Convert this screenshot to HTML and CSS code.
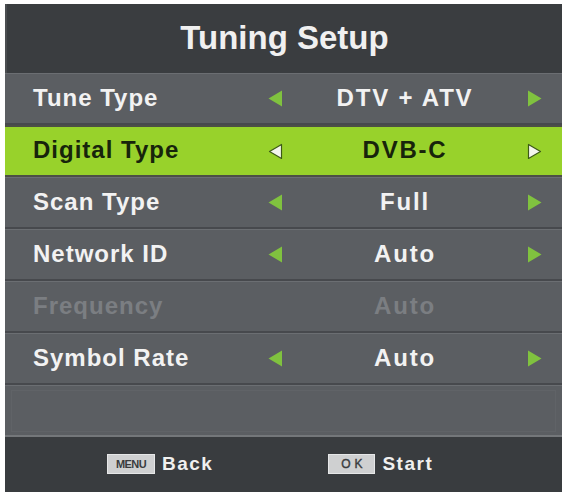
FILE: index.html
```html
<!DOCTYPE html>
<html>
<head>
<meta charset="utf-8">
<link rel="stylesheet" href="styles.css">
</head>
<body>
<div class="panel">
  <div class="header">Tuning Setup</div>
  <div class="rows">
    <div class="row">
      <span class="label">Tune Type</span>
      <svg class="arrow" viewBox="0 0 15 17"><polygon points="14,0.5 14,16.5 0.5,8.5" class="tri"/></svg>
      <span class="value">DTV + ATV</span>
      <svg class="arrow" viewBox="0 0 15 17"><polygon points="1,0.5 1,16.5 14.5,8.5" class="tri"/></svg>
    </div>
    <div class="row active">
      <span class="label">Digital Type</span>
      <svg class="arrow" viewBox="0 0 15 17"><polygon points="13.5,1.5 13.5,15.5 1.5,8.5" class="tri-w"/></svg>
      <span class="value">DVB-C</span>
      <svg class="arrow" viewBox="0 0 15 17"><polygon points="1.5,1.5 1.5,15.5 13.5,8.5" class="tri-w"/></svg>
    </div>
    <div class="row">
      <span class="label">Scan Type</span>
      <svg class="arrow" viewBox="0 0 15 17"><polygon points="14,0.5 14,16.5 0.5,8.5" class="tri"/></svg>
      <span class="value">Full</span>
      <svg class="arrow" viewBox="0 0 15 17"><polygon points="1,0.5 1,16.5 14.5,8.5" class="tri"/></svg>
    </div>
    <div class="row">
      <span class="label">Network ID</span>
      <svg class="arrow" viewBox="0 0 15 17"><polygon points="14,0.5 14,16.5 0.5,8.5" class="tri"/></svg>
      <span class="value">Auto</span>
      <svg class="arrow" viewBox="0 0 15 17"><polygon points="1,0.5 1,16.5 14.5,8.5" class="tri"/></svg>
    </div>
    <div class="row disabled">
      <span class="label">Frequency</span>
      <span class="arrow"></span>
      <span class="value">Auto</span>
      <span class="arrow"></span>
    </div>
    <div class="row">
      <span class="label">Symbol Rate</span>
      <svg class="arrow" viewBox="0 0 15 17"><polygon points="14,0.5 14,16.5 0.5,8.5" class="tri"/></svg>
      <span class="value">Auto</span>
      <svg class="arrow" viewBox="0 0 15 17"><polygon points="1,0.5 1,16.5 14.5,8.5" class="tri"/></svg>
    </div>
    <div class="row empty"><div class="inner"></div></div>
  </div>
  <div class="footer">
    <div class="hint"><span class="key key-menu">MENU</span><span class="hint-text">Back</span></div>
    <div class="hint"><span class="key key-ok">OK</span><span class="hint-text">Start</span></div>
  </div>
</div>
</body>
</html>
```
FILE: styles.css
```css
html, body {
  margin: 0;
  padding: 0;
  background: #ffffff;
}
body {
  font-family: "Liberation Sans", Arial, sans-serif;
  font-weight: bold;
}
.panel {
  margin: 4px 0 0 5px;
  width: 557px;
  height: 488px;
  display: flex;
  flex-direction: column;
  background: #3a3d40;
}
.header {
  height: 69px;
  display: flex;
  align-items: center;
  justify-content: center;
  color: #f0f0f0;
  font-size: 33px;
  padding-bottom: 1px;
  box-sizing: border-box;
  background: #3a3d40;
  border-left: 2px solid #4a4d50;
}
.rows {
  display: flex;
  flex-direction: column;
}
.row {
  height: 52px;
  box-sizing: border-box;
  display: grid;
  grid-template-columns: 235px 15px 244px 15px 1fr;
  align-items: center;
  background: #5b5e62;
  border-top: 1px solid #6b6e72;
  border-bottom: 2px solid #47494d;
  padding-left: 28px;
  color: #f2f2f2;
  font-size: 24px;
}
.label {
  letter-spacing: 1px;
  padding-bottom: 2px;
}
.value {
  text-align: center;
  letter-spacing: 1.8px;
  padding-bottom: 2px;
}
.arrow {
  width: 15px;
  height: 17px;
  display: block;
}
.tri {
  fill: #80c23f;
}
.tri-w {
  fill: #f4f6ee;
  stroke: #3d5a17;
  stroke-width: 1.2;
  stroke-linejoin: round;
}
.row.active {
  background: #98d22b;
  color: #17240b;
  border-top: 2px solid #4c4f46;
  border-bottom: 2px solid #4c4f46;
}
.row.disabled {
  color: #7b7e82;
}
.row.empty {
  display: block;
  padding: 4px 6px 3px 6px;
  border-bottom: 2px solid #74777a;
}
.inner {
  height: 100%;
  box-sizing: border-box;
  border: 1px solid #606367;
}
.footer {
  flex: 1;
  display: flex;
  align-items: center;
  padding-left: 102px;
  gap: 115px;
  background: #393c3f;
  padding-bottom: 2px;
}
.hint {
  display: flex;
  align-items: center;
  gap: 7px;
}
.key {
  display: flex;
  align-items: center;
  justify-content: center;
  height: 20px;
  box-sizing: border-box;
  background: #cfd0d1;
  border: 1px solid #e6e7e8;
  color: #3a3c3e;
}
.key-menu {
  width: 48px;
  font-size: 11px;
  letter-spacing: -0.6px;
}
.key-ok {
  width: 47px;
  font-size: 12px;
  letter-spacing: 4px;
  padding-left: 4px;
  font-weight: normal;
  -webkit-text-stroke: 0.4px #3a3c3e;
}
.hint-text {
  color: #f0f0f0;
  font-size: 19px;
  letter-spacing: 1.5px;
}
```
